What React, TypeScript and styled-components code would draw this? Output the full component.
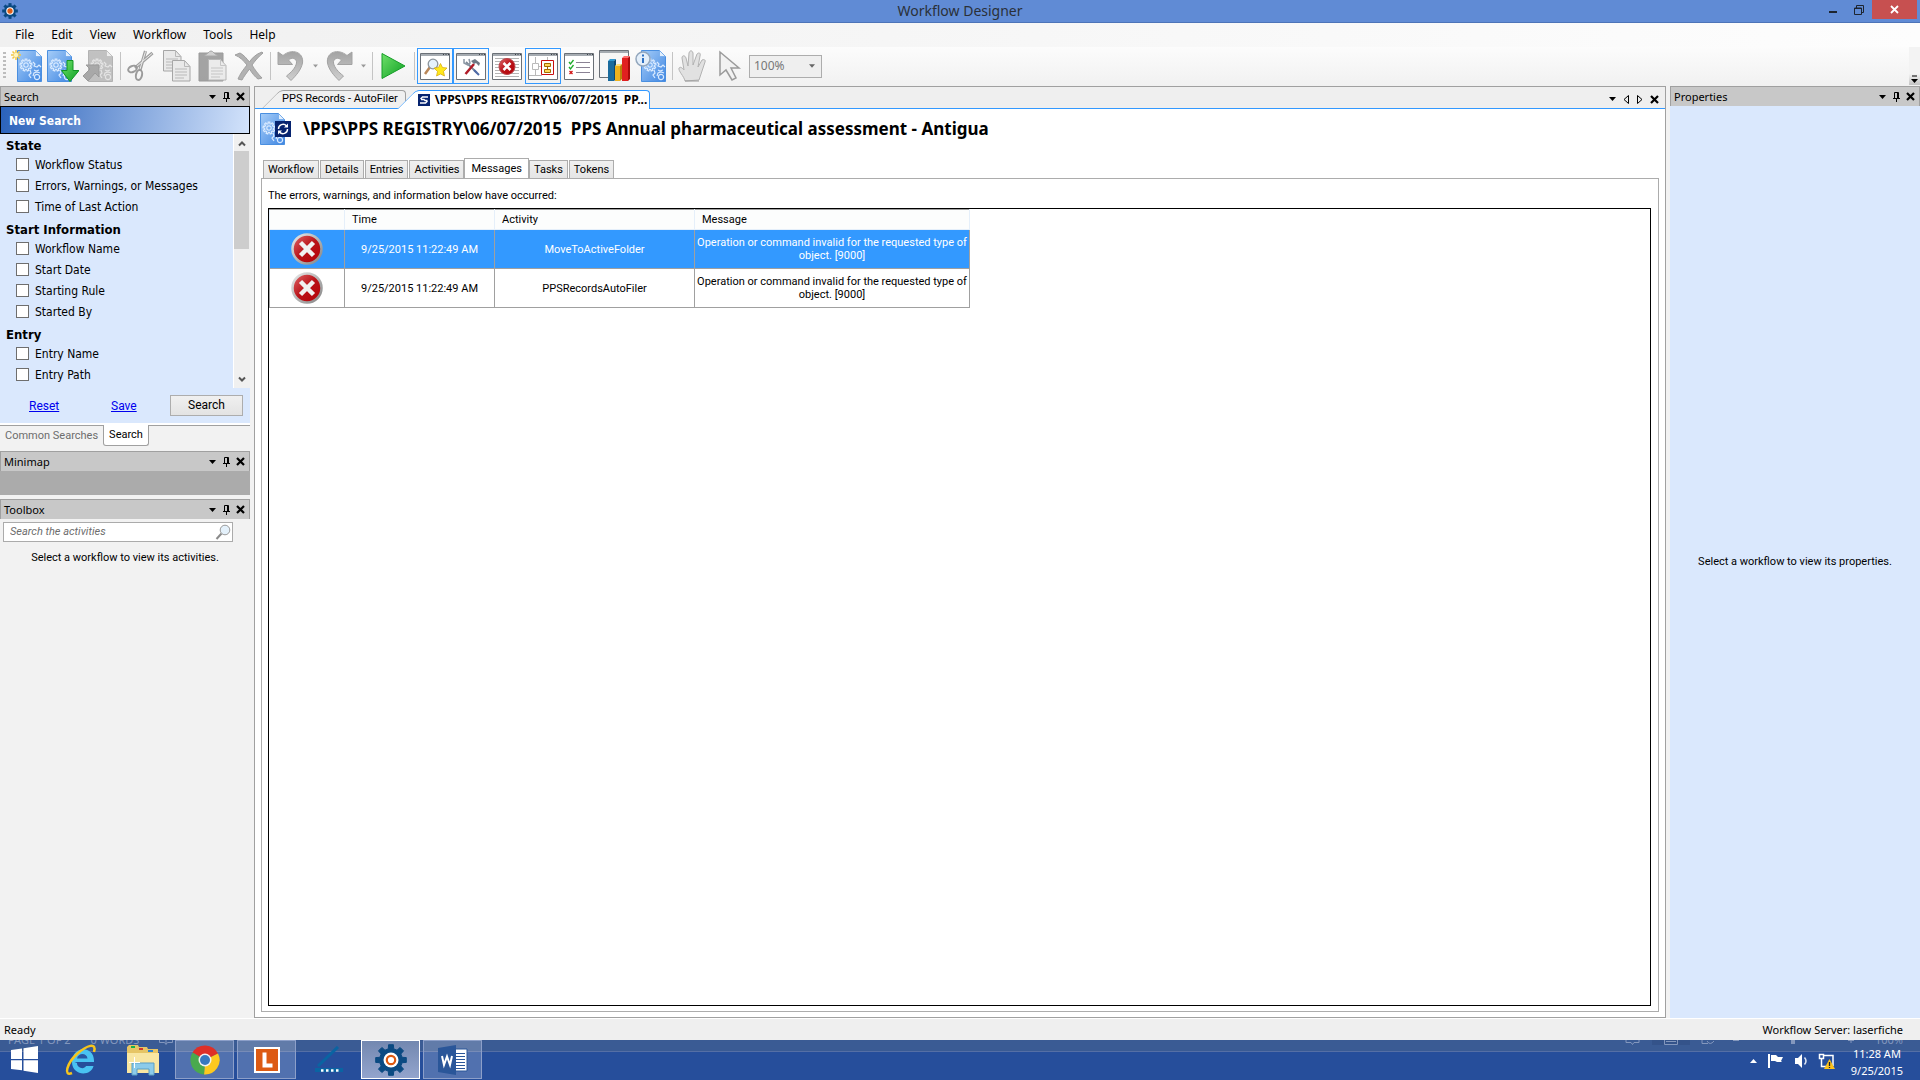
import React from "react";
import styled, { createGlobalStyle, css } from "styled-components";

const ui = `"Noto Sans", "Open Sans", sans-serif`;
const tahoma = `"DejaVu Sans Condensed", "DejaVu Sans", sans-serif`;
const classic = `Roboto, "Liberation Sans", Arial, sans-serif`;

const GlobalStyle = createGlobalStyle`
  *, *::before, *::after { box-sizing: border-box; }
  body { margin: 0; font: 11px/16px ${classic}; color: #000; background: #efefef; }
  button, input, select { font: inherit; color: inherit; margin: 0; }
  button { padding: 0; border: 0; background: none; }
  svg { display: block; flex: none; }
`;

const Window = styled.div`
  display: flex;
  flex-direction: column;
  min-height: 100vh;
`;

/* ---------- title bar and menu ---------- */

const TitleBar = styled.header`
  display: grid;
  grid-template-columns: 1fr auto 1fr;
  height: 23px;
  background: #608bd5;
  border-bottom: 1px solid #4d74b8;
`;

const AppIcon = styled.span`
  padding: 3px 2px;
`;

const WindowTitle = styled.h1`
  margin: 0;
  font: 14px/22px ${ui};
  color: #2a3038;
`;

const WindowButtons = styled.div`
  display: flex;
  justify-content: flex-end;
  padding-right: 3px;
`;

const WindowButton = styled.button<{ $close?: boolean }>`
  display: grid;
  place-items: center;
  width: ${(p) => (p.$close ? 45 : 26)}px;
  height: 19px;
  background: ${(p) => (p.$close ? "#c75050" : "transparent")};
`;

const MenuBar = styled.nav`
  display: flex;
  height: 24px;
  padding-left: 7px;
  background: linear-gradient(90deg, #f0f0f0, #fdfdfd);
`;

const MenuItem = styled.button`
  padding: 0 9px 0 8px;
  font: 12px/24px ${ui};
`;

/* ---------- toolbar ---------- */

const Toolbar = styled.div`
  display: flex;
  align-items: center;
  height: 39px;
  padding-bottom: 1px;
  background: linear-gradient(#fcfcfc, #f1f1f1);
`;

const Grip = styled.span`
  width: 3px;
  height: 28px;
  margin: 0 3px;
  background: repeating-linear-gradient(#bdbdbd 0 2px, transparent 2px 4px);
`;

const ToolButton = styled.button<{ $on?: boolean; $faded?: boolean }>`
  display: grid;
  place-items: center;
  width: 36px;
  height: 36px;
  border: 1px solid ${(p) => (p.$on ? "#3399ff" : "transparent")};
  opacity: ${(p) => (p.$faded ? 0.8 : 1)};
`;

const DropButton = styled.button`
  display: grid;
  place-items: center;
  width: 12px;
  height: 36px;
`;

const Separator = styled.span`
  width: 6px;
  height: 28px;
  background: linear-gradient(#c4c4c4, #c4c4c4) center / 1px 100% no-repeat;
`;

const ZoomBox = styled.div`
  display: grid;
  grid-template-columns: 1fr 12px;
  align-items: center;
  width: 73px;
  height: 23px;
  margin-left: 2px;
  border: 1px solid #adadad;
  background: #efefef;
  color: #777;

  select {
    grid-area: 1 / 1 / 2 / 3;
    width: 100%;
    height: 21px;
    padding: 0 4px;
    appearance: none;
    border: 0;
    background: none;
    font: 12px/20px ${ui};
  }

  svg { grid-area: 1 / 2; }
`;

const Overflow = styled.button`
  display: grid;
  place-items: end center;
  width: 11px;
  height: 38px;
  margin-left: auto;
  padding-bottom: 2px;
  background: linear-gradient(#f3f3f3 70%, #c4c4c4);
`;

/* ---------- docked panels ---------- */

const Workspace = styled.main`
  display: grid;
  grid-template-columns: 250px minmax(0, 1fr) 250px;
  gap: 4px;
  flex: 1;
  background: #f2f2f2;
`;

const Column = styled.div`
  display: flex;
  flex-direction: column;
  min-width: 0;
`;

const PanelHeader = styled.header`
  display: flex;
  align-items: center;
  height: 20px;
  padding: 0 2px 0 3px;
  border: 1px solid #a0a0a0;
  border-bottom: 0;
  background: #c8c8c8;
`;

const PanelTitle = styled.h2`
  flex: 1;
  margin: 0;
  font: 11px/16px ${ui};
`;

const PanelButton = styled.button`
  display: grid;
  place-items: center;
  width: 14px;
  height: 16px;
`;

const NewSearch = styled.div`
  height: 28px;
  padding-left: 8px;
  border: 1px solid #000;
  background: linear-gradient(100deg, #2a62bb, #d3e3fb);
  color: #fff;
  font: bold 12px/28px ${tahoma};
`;

const CriteriaArea = styled.div`
  display: flex;
  height: 254px;
  background: #dae8fd;
`;

const Criteria = styled.div`
  flex: 1;
  overflow: hidden;
`;

const CriteriaGroup = styled.fieldset`
  margin: 0 0 1px;
  padding: 0 0 0 6px;
  border: 0;

  legend {
    height: 20px;
    padding: 0;
    font: bold 13px/24px ${tahoma};
  }
`;

const Criterion = styled.label`
  display: flex;
  align-items: center;
  gap: 6px;
  height: 21px;
  padding-left: 10px;
  font: 12px/20px ${tahoma};

  input {
    width: 13px;
    height: 13px;
    appearance: none;
    border: 1px solid #6e6e6e;
    background: #fff;
  }

  input:checked { background: #3399ff; }
`;

const ScrollBar = styled.div`
  display: flex;
  flex-direction: column;
  align-items: center;
  justify-content: space-between;
  width: 17px;
  padding: 6px 0 5px;
  border-left: 1px solid #fff;
  background: linear-gradient(#cdcdcd, #cdcdcd) 0 17px / 15px 98px no-repeat #f0f0f0;
`;

const SearchActions = styled.div`
  display: grid;
  grid-template-columns: 82px 1fr 73px;
  align-items: center;
  height: 35px;
  padding: 0 7px 0 29px;
  background: #dae8fd;
`;

const ActionLink = styled.a`
  justify-self: start;
  color: #0000ee;
  font: 12px/16px ${classic};
`;

const SearchButton = styled.button`
  height: 21px;
  border: 1px solid #adadad;
  background: linear-gradient(#f0f0f0, #e3e3e3);
  font: 12px/19px ${classic};
`;

const BottomTabs = styled.div`
  display: flex;
  height: 24px;
  margin-bottom: 4px;
  border-top: 2px solid #fff;
  background: linear-gradient(#a0a0a0, #a0a0a0) 0 0 / 100% 1px no-repeat;
`;

const BottomTab = styled.button<{ $active?: boolean }>`
  height: 21px;
  padding: 0 5px;
  border: solid #a0a0a0;
  border-width: ${(p) => (p.$active ? "0 1px 1px" : "0")};
  border-radius: 0 0 3px 3px;
  background: ${(p) => (p.$active ? "#fff" : "transparent")};
  color: ${(p) => (p.$active ? "#000" : "#6d6d6d")};
  font: 11px/20px ${classic};
`;

const Minimap = styled.div`
  height: 24px;
  margin-bottom: 4px;
  background: #ababab;
`;

const SearchField = styled.label`
  display: flex;
  align-items: center;
  width: 230px;
  height: 20px;
  margin: 3px 0 0 3px;
  border: 1px solid #ababab;
  background: #fff;

  input {
    flex: 1;
    min-width: 0;
    height: 18px;
    padding: 0 6px;
    border: 0;
    background: none;
    font: italic 11px/18px ${classic};
  }

  input::placeholder { color: #6d6d6d; opacity: 1; }
`;

const Hint = styled.p`
  margin: 8px 0;
  text-align: center;
  font: 11px/16px ${classic};
`;

const Properties = styled.div`
  display: grid;
  place-items: center;
  flex: 1;
  background: #dae8fd;
`;

/* ---------- document area ---------- */

const Document = styled(Column)`
  border: 1px solid #a0a0a0;
  background: #fff;
`;

const DocTabs = styled.div`
  display: flex;
  align-items: flex-end;
  height: 22px;
  padding: 0 4px 0 7px;
  border-bottom: 1px solid #3399ff;
  background: #efefef;
`;

const DocTab = styled.button<{ $active?: boolean }>`
  position: relative;
  display: flex;
  align-items: center;
  gap: 5px;
  height: ${(p) => (p.$active ? 19 : 18)}px;
  margin: 0 0 ${(p) => (p.$active ? "-1px -9px" : "0 0")};
  padding: ${(p) => (p.$active ? "0 3px 0 21px" : "0 8px 0 20px")};
  font: ${(p) => (p.$active ? "bold 12px" : "normal 11px")} / 18px ${(p) => (p.$active ? ui : classic)};
  white-space: pre;

  &::before, &::after {
    content: "";
    position: absolute;
    top: 0;
    bottom: 0;
    border: 1px solid ${(p) => (p.$active ? "#3399ff" : "#a0a0a0")};
    border-bottom: 0;
    background: ${(p) => (p.$active ? "#fff" : "#f0f0f0")};
  }

  &::before {
    left: 0;
    width: 60px;
    border-right: 0;
    border-top-left-radius: 4px;
    transform: skewX(-45deg);
    transform-origin: bottom;
  }

  &::after {
    left: 30px;
    right: 0;
    border-left: 0;
    border-top-right-radius: 4px;
  }

  > * { position: relative; z-index: 1; }
`;

const DocControls = styled.div`
  display: flex;
  margin-left: auto;
  padding-bottom: 1px;
`;

const DocHeading = styled.div`
  display: flex;
  align-items: center;
  gap: 11px;
  height: 40px;
  padding-left: 5px;
`;

const DocTitle = styled.h2`
  margin: 0;
  font: bold 17px/24px ${ui};
  white-space: pre;
`;

const PageTabs = styled.div`
  display: flex;
  align-items: flex-end;
  gap: 1px;
  height: 30px;
  margin-bottom: -1px;
  padding-left: 8px;
`;

const PageTab = styled.button<{ $active?: boolean }>`
  height: ${(p) => (p.$active ? 21 : 19)}px;
  margin: 0 ${(p) => (p.$active ? "-1px" : "0")};
  padding: 0 ${(p) => (p.$active ? 6 : 4)}px;
  border: 1px solid #acacac;
  border-bottom-color: ${(p) => (p.$active ? "#fff" : "#acacac")};
  background: ${(p) => (p.$active ? "#fff" : "linear-gradient(#f0f0f0, #e5e5e5)")};
  font: 11px/18px ${classic};
`;

const Page = styled.section`
  display: flex;
  flex-direction: column;
  flex: 1;
  margin: 0 6px 5px;
  padding: 9px 7px 5px 6px;
  border: 1px solid #acacac;
`;

const Intro = styled.p`
  margin: 0 0 4px;
  font: 11px/16px ${classic};
`;

const GridFrame = styled.div`
  flex: 1;
  border: 1px solid #000;
`;

const MessageTable = styled.table`
  width: 701px;
  table-layout: fixed;
  border-collapse: collapse;
  font: 11px/13px ${classic};

  th {
    height: 20px;
    padding: 0 7px;
    border: 1px solid #e5effa;
    border-top-color: #a0a0a0;
    background: #fcfdfd;
    font-weight: normal;
    text-align: left;
  }
`;

const MessageRow = styled.tr<{ $selected?: boolean }>`
  height: 39px;
  ${(p) => p.$selected && css`background: #3399ff; color: #fff;`}

  td {
    padding: 0 1px;
    border: 1px solid #a0a0a0;
    text-align: center;
  }

  svg { margin: 0 auto; }
`;

/* ---------- status bar and taskbar ---------- */

const StatusBar = styled.footer`
  display: flex;
  justify-content: space-between;
  height: 22px;
  padding: 0 17px 0 4px;
  border-top: 1px solid #fff;
  background: #efefef;
  font: 11px/22px ${ui};
`;

const Taskbar = styled.nav`
  position: relative;
  display: flex;
  gap: 3px;
  height: 40px;
  background: linear-gradient(#3a5b94 0 11px, #556fa5 11px 12px, #264e9b 12px);
`;

const Ghost = styled.div`
  position: absolute;
  inset: 0 0 auto 0;
  display: flex;
  gap: 20px;
  height: 5px;
  padding: 0 17px 0 8px;
  overflow: hidden;
  color: #8397bd;
  font: 11px/16px ${ui};

  span { margin-top: -8px; }
  svg:last-of-type { margin-left: auto; }
`;

const TaskButton = styled.button<{ $state?: "open" | "active"; $start?: boolean }>`
  position: relative;
  display: grid;
  place-items: center;
  width: ${(p) => (p.$start ? 48 : 59)}px;
  height: 39px;
  border: 1px solid transparent;
  ${(p) => p.$state === "open" && css`border-color: #8c9fc9; background: rgba(255, 255, 255, 0.2);`}
  ${(p) => p.$state === "active" && css`border-color: #fff; background: linear-gradient(#7388b0, #93a4cd);`}
`;

const Tray = styled.div`
  display: flex;
  align-items: center;
  gap: 10px;
  margin-left: auto;
  padding: 2px 17px 0 0;
`;

const Clock = styled.time`
  margin-left: 6px;
  padding-top: 1px;
  color: #fff;
  font: 11px/17px ${ui};
  text-align: center;
`;

/* ---------- icons ---------- */

const gearPath = (r: number, n: number, depth: number) => {
  const pts: string[] = [];
  for (let i = 0; i < n; i++) {
    const step = (Math.PI * 2) / n;
    [[-0.3, r - depth], [-0.2, r], [0.2, r], [0.3, r - depth]].forEach(([o, d]) => {
      const a = step * (i + o);
      pts.push(`${(Math.sin(a) * d).toFixed(2)},${(-Math.cos(a) * d).toFixed(2)}`);
    });
  }
  return `M${pts.join("L")}Z`;
};

const GearLogo = ({ size }: { size: number }) => (
  <svg width={size} height={size} viewBox="-16 -16 32 32">
    <path d={gearPath(15.5, 8, 4)} fill="#0b4a82" stroke="#0b4a82" />
    <circle r="7.5" fill="#fff" />
    <circle r="4.2" fill={size > 20 ? "#fff" : "#dd5a12"} stroke="#dd5a12" strokeWidth="2.2" />
  </svg>
);

const DocShape = ({ gray, x = 4 }: { gray?: boolean; x?: number }) => (
  <g transform={`translate(${x} 0)`}>
    <path d="M.5.5h18l6 6v25H.5z" fill={gray ? "#b4b4b4" : "url(#docBlue)"} stroke={gray ? "#a2a2a2" : "#4a8fe0"} />
    <path d="M18.500 .5l6 6h-6z" fill={gray ? "#ececec" : "#e2effd"} stroke={gray ? "#aaa" : "#69a4ea"} strokeWidth=".7" />
    <g fill="none" stroke={gray ? "#e0e0e0" : "#d9eaff"} strokeWidth="1.200">
      <g transform="translate(9 15)"><path d={gearPath(6, 9, 1.6)} /><circle r="2.200" /></g>
      <g transform="translate(20 27)"><circle r="2.600" /><path d="M-4-1l1-3 3-1 3 1" /></g>
      <path d="M16 12l2 2-1 2 3 1 2-2 2 2M13 20l1 3-2 2 2 3M17 20l2 1 3-1" />
    </g>
  </g>
);

const Defs = () => (
  <defs>
    <linearGradient id="docBlue" x1="0" y1="0" x2="1" y2="1">
      <stop offset="0" stopColor="#a6cdf8" /><stop offset="1" stopColor="#3f86e2" />
    </linearGradient>
    <linearGradient id="green" x1="0" y1="0" x2="1" y2="1">
      <stop offset="0" stopColor="#6fe06a" /><stop offset="1" stopColor="#0ea023" />
    </linearGradient>
    <linearGradient id="gray" x1="0" y1="0" x2="0" y2="1">
      <stop offset="0" stopColor="#a3a3a3" /><stop offset="1" stopColor="#cfcfcf" />
    </linearGradient>
    <linearGradient id="red" x1="0" y1="0" x2="1" y2="1">
      <stop offset="0" stopColor="#e0696b" /><stop offset=".5" stopColor="#b91218" /><stop offset="1" stopColor="#b50006" />
    </linearGradient>
    <linearGradient id="ring" x1="0" y1="0" x2="1" y2="1">
      <stop offset="0" stopColor="#e8e8e8" /><stop offset="1" stopColor="#858585" />
    </linearGradient>
  </defs>
);

const Icon32 = ({ children }: { children: React.ReactNode }) => (
  <svg width="32" height="32" viewBox="0 0 32 32"><Defs />{children}</svg>
);

const NewIcon = () => (
  <Icon32>
    <DocShape x={6} />
    <path d="M5 0v10M0 5h10M1.500 1.500l7 7M8.500 1.500l-7 7" stroke="#f2c642" strokeWidth="1.500" />
    <circle cx="5" cy="5" r="2.200" fill="#fff4bd" />
  </Icon32>
);
const OpenIcon = () => (
  <Icon32>
    <DocShape x={0} />
    <path d="M20 10.500h6v10h6L23 31.500l-8.500-11H20z" fill="url(#green)" stroke="#119622" />
  </Icon32>
);
const PublishIcon = () => (
  <Icon32>
    <DocShape x={5} gray />
    <path d="M3 15h13v12l-4-4-7 8-5-5 7-7z" fill="#969696" stroke="#858585" />
  </Icon32>
);
const CutIcon = () => (
  <Icon32>
    <g fill="none" stroke="#9b9b9b">
      <path d="M20.500 1l-5.500 19M27.500 3L10 18" stroke="#a0a0a0" strokeWidth="3.200" />
      <path d="M20.500 1.500L15 19M27 3.500L11 17" stroke="#ececec" strokeWidth="1" />
      <ellipse cx="7.500" cy="19" rx="4.500" ry="3" transform="rotate(-22 7.500 19)" strokeWidth="2" />
      <ellipse cx="14" cy="25" rx="3" ry="5" transform="rotate(14 14 25)" strokeWidth="2" />
    </g>
  </Icon32>
);
const PageGlyph = ({ x, y }: { x: number; y: number }) => (
  <g transform={`translate(${x} ${y})`}>
    <path d="M.5.5h12l5.500 6v14.500H.5z" fill="#e9e9e9" stroke="#a6a6a6" />
    <path d="M12.500.5v6H18M3 9h12M3 12h12M3 15h12M3 18h9" fill="none" stroke="#b9b9b9" />
  </g>
);
const CopyIcon = () => <Icon32><PageGlyph x={2} y={0} /><PageGlyph x={11} y={10} /></Icon32>;
const PasteIcon = () => (
  <Icon32>
    <path d="M2 3h24v28H2z" fill="#8f8f8f" stroke="#848484" />
    <path d="M7 6l4-3q3-4 6 0l4 3z" fill="#c8c8c8" stroke="#949494" />
    <PageGlyph x={11} y={9} />
  </Icon32>
);
const DeleteIcon = () => (
  <Icon32>
    <path d="M2 5l5-2c4 2 7 6 9.500 9C19 8 23 4 29 2l1 1c-5 4-8 8-11 12 3 5 6 9 10 13l-4 1c-3-2-6-6-8.500-10-3 4-6 8-7.500 11l-4-1c2-5 5-9 9-14C11 11 7 7 2 5z" fill="#b2b2b2" stroke="#a0a0a0" />
  </Icon32>
);
const TurnIcon = ({ flip }: { flip?: boolean }) => (
  <Icon32>
    <g transform={flip ? "translate(32 0) scale(-1 1)" : undefined}>
      <path d="M3 2l5 3.500c9-7.500 21-3.500 19.500 7.500-1.500 7-6 12-11.500 17.500l-4.500-4.500c5-4 9-8 10-13 .5-5-5-6-8-3l4 4.500H3z" fill="url(#gray)" stroke="#a3a3a3" />
    </g>
  </Icon32>
);
const RunIcon = () => (
  <Icon32><path d="M5 3.500l23 12.500L5 28.500z" fill="url(#green)" stroke="#159e27" /></Icon32>
);
const PaneFrame = ({ children }: { children?: React.ReactNode }) => (
  <Icon32>
    <path d="M1.500 3.500h29v26h-29z" fill="#fff" stroke="#6a7077" />
    <path d="M2 4h28v2H2z" fill="#a5abb1" />
    <path d="M24 4.500h1M26.500 4.500h1M29 4.500h1" stroke="#3a4047" />
    {children}
  </Icon32>
);
const SearchPaneIcon = () => (
  <PaneFrame>
    <path d="M11 17l-5 7" stroke="#b98758" strokeWidth="2.500" />
    <circle cx="14" cy="14" r="4.800" fill="#e6f2fc" stroke="#8b949c" strokeWidth="1.300" />
    <path d="M21.500 13.500l2 4 4.500.5-3.500 3.500 1 4.500-4-2-4 2 1-4.500-3.500-3.500 4.500-.5z" fill="#ffe81c" stroke="#d6a808" strokeWidth=".7" />
  </PaneFrame>
);
const ToolsPaneIcon = () => (
  <PaneFrame>
    <path d="M11 12l11 11" stroke="#7c8896" strokeWidth="1.800" />
    <path d="M19 14l-8.500 10" stroke="#b01c28" strokeWidth="2.500" />
    <path d="M16 11l4-2 5 4-1 3-3-3-2 1z" fill="#6d7884" />
    <path d="M9 9v4l4 2 2-2-1-4" fill="none" stroke="#8b97a4" strokeWidth="1.500" />
    <path d="M19 20l5 5" stroke="#4d6aa8" strokeWidth="2" />
  </PaneFrame>
);
const ErrorPaneIcon = () => (
  <PaneFrame>
    <path d="M4 8.500h24M4 11.500h24M4 14.500h24M4 17.500h24M4 20.500h24M4 23.500h24M4 26.500h24" stroke="#b4b4b4" />
    <circle cx="16" cy="16.500" r="8" fill="url(#red)" stroke="#b9454a" />
    <path d="M12.500 13l7 7M19.500 13l-7 7" stroke="#fff" strokeWidth="2.500" />
  </PaneFrame>
);
const MinimapPaneIcon = () => (
  <PaneFrame>
    <path d="M8.500 7v6.500h-3v6h6v-6h-3M8.500 20v5.500M2 25.500h13M11.500 16.500H15M20.500 7v3" fill="none" stroke="#b9b9b9" />
    <path d="M14.500 10.500h12v14h-12z" fill="none" stroke="#c80f10" />
    <path d="M17.500 13.500h6v3h-6zM17.500 19.500h6v3h-6zM20.500 17v2" fill="#ffd75e" stroke="#a06d00" />
  </PaneFrame>
);
const TasksPaneIcon = () => (
  <PaneFrame>
    <path d="M13 12.500h14M13 17.500h14M13 22.500h14" stroke="#8a8294" />
    <path d="M6 12l1.500 2 3-4M6 17l1.500 2 3-4" fill="none" stroke="#1eaa2a" strokeWidth="1.300" />
    <path d="M6.500 21l3 3M9.500 21l-3 3" stroke="#d21414" strokeWidth="1.300" />
  </PaneFrame>
);
const ReportIcon = () => (
  <Icon32>
    <path d="M.5.5h29v27H.5z" fill="#f6f6f6" stroke="#6a7077" />
    <path d="M1 1h28v2H1z" fill="#a5abb1" />
    <path d="M9 11h6v20H9z" fill="#1b6b9d" /><path d="M9 11l2-2h6l-2 2z" fill="#2f98d1" /><path d="M15 11l2-2v20l-2 2z" fill="#0f4a72" />
    <path d="M16 16h5v15h-5z" fill="#eeb21c" /><path d="M16 16l2-2h5l-2 2z" fill="#ffe07a" /><path d="M21 16l2-2v15l-2 2z" fill="#b9820a" />
    <path d="M23 8h6v23h-6z" fill="#e02020" /><path d="M29 8l2-2v23l-2 2z" fill="#a90a0a" /><path d="M23 8l2-2h6l-2 2z" fill="#ff6d6d" />
  </Icon32>
);
const InfoDocIcon = () => (
  <Icon32>
    <DocShape x={6} />
    <circle cx="8" cy="9" r="7" fill="#e4effa" stroke="#93a7bd" strokeWidth="1.500" />
    <path d="M8 8v5M8 4.500v2" stroke="#2f71c2" strokeWidth="2" />
  </Icon32>
);
const HandIcon = () => (
  <Icon32>
    <path d="M8 31c-1-5-7-10-6-13 2-2 4 1 5 2L5 8c0-3 3-3 4 0l2 8 1-13c1-3 3-3 4 0v12l4-11c2-2 4-1 3 2l-2 11 4-7c2-1 4 0 3 2-2 6-4 12-6 18z" fill="#e1e1e1" stroke="#b2b2b2" />
    <path d="M8 31h14" stroke="#999" />
  </Icon32>
);
const PointerIcon = () => (
  <Icon32><path d="M7 2v23l6-5 6 10 4-2-5-10h8z" fill="#f2f2f2" stroke="#9b9b9b" strokeWidth="1.500" /></Icon32>
);

const Down = ({ color = "#000", size = 7 }: { color?: string; size?: number }) => (
  <svg width={size} height="4" viewBox="0 0 7 4"><path d="M0 0h7L3.500 4z" fill={color} /></svg>
);
const Pin = () => (
  <svg width="9" height="10" viewBox="0 0 9 10"><path d="M2.500 6V.5h4V6M5.500 1v5M1 6.500h7M4.500 7v3" fill="none" stroke="#000" /></svg>
);
const Cross = ({ color = "#000", w = 2.2 }: { color?: string; w?: number }) => (
  <svg width="9" height="9" viewBox="0 0 9 9"><path d="M1 1l7 7M8 1L1 8" stroke={color} strokeWidth={w} /></svg>
);
const Arrow = ({ left }: { left?: boolean }) => (
  <svg width="6" height="9" viewBox="0 0 6 9"><path d={left ? "M5.500 .5v8L1 4.500z" : "M.5.5v8L5 4.500z"} fill="none" stroke="#000" /></svg>
);
const Chevron = ({ up }: { up?: boolean }) => (
  <svg width="8" height="7" viewBox="0 0 8 7"><path d={up ? "M1 5.500l3-3 3 3" : "M1 1.500l3 3 3-3"} fill="none" stroke="#555" strokeWidth="2" /></svg>
);
const SyncMark = () => (
  <>
    <path d="M0 0h16v16H0z" fill="#06236f" />
    <path d="M3.500 8a4.500 4.500 0 0 1 8-3M12.500 8a4.500 4.500 0 0 1-8 3" fill="none" stroke="#fff" strokeWidth="1.400" />
    <path d="M13 2.500v4H9zM3 13.500v-4h4z" fill="#fff" />
  </>
);
const SyncIcon = () => (
  <svg width="12" height="12" viewBox="0 0 12 12">
    <path d="M0 0h12v12H0z" fill="#06236f" />
    <path d="M10 3H4.500L2.500 5M2 9h5.500l2-2M3 5.500h3l1 1h2.500" fill="none" stroke="#fff" strokeWidth="1.400" />
  </svg>
);
const InstanceIcon = () => (
  <Icon32>
    <DocShape x={0} />
    <g transform="translate(15 8)"><SyncMark /></g>
  </Icon32>
);
const ErrorIcon = () => (
  <Icon32>
    <circle cx="16" cy="16" r="14.500" fill="url(#red)" stroke="url(#ring)" strokeWidth="2.500" />
    <path d="M9.500 9.500l13 13M22.500 9.500l-13 13" stroke="#f1f1f1" strokeWidth="4.500" />
  </Icon32>
);
const Magnifier = () => (
  <svg width="17" height="17" viewBox="0 0 17 17">
    <path d="M6.500 9.500L1.500 15" stroke="#8a8a8a" strokeWidth="2" />
    <circle cx="10" cy="6" r="4.800" fill="#e4f1fb" stroke="#9a9a9a" />
  </svg>
);

const StartIcon = () => (
  <svg width="27" height="27" viewBox="0 0 27 27"><path d="M0 4l11-1.500V13H0zM12.500 2.200L27 0v13H12.500zM0 14.300h11v10L0 23zM12.500 14.300H27V27l-14.500-2.300z" fill="#fff" /></svg>
);
const IeIcon = () => (
  <svg width="32" height="32" viewBox="0 0 32 32">
    <path d="M9 18h8.500M9.500 18H29c1-17-22-17-22 0 0 14 19 15 21.500 4H21c-2 4-9 2-9-3" fill="#49c3f2" />
    <path d="M12 14.500c1-6 10-6 10.500 0z" fill="#2858a4" />
    <path d="M7 29C-2 33 2 19 12 10S32-2 29 8" fill="none" stroke="#f7c51c" strokeWidth="2.500" />
  </svg>
);
const FolderIcon = () => (
  <svg width="34" height="32" viewBox="0 0 34 32">
    <path d="M1 3l2-2h9l1 2h8l1 2h10v24H1z" fill="#e6c565" />
    <path d="M5 2h4v2H5z" fill="#18b04b" /><path d="M13 4h4v2h-4z" fill="#d2392b" /><path d="M22 6h5v2h-5z" fill="#2a80cf" />
    <path d="M1 9h32v20H1z" fill="#f8e6a2" />
    <path d="M6 31V19h22v12h-5v-6H11v6z" fill="#8ccbea" stroke="#5b9fc6" />
    <path d="M8.500 13v11M3 18.500h11" stroke="#fff" strokeWidth="1" />
  </svg>
);
const ChromeIcon = () => (
  <svg width="30" height="30" viewBox="-15 -15 30 30">
    <path d="M0 0L-12.500-7.500A14.500 14.500 0 0 1 13-6.500z" fill="#de2f27" />
    <path d="M0 0L13-6.500A14.500 14.500 0 0 1-1 14.500z" fill="#fcc91f" />
    <path d="M0 0L-1 14.500A14.500 14.500 0 0 1-12.500-7.500z" fill="#4aaa4e" />
    <circle r="6.500" fill="#f2f2f2" /><circle r="5" fill="#3878bf" />
  </svg>
);
const LaserficheIcon = () => (
  <svg width="26" height="26" viewBox="0 0 26 26"><path d="M1 1h24v24H1z" fill="#dd5a12" stroke="#fff" strokeWidth="2" /><path d="M8.500 5.500h4v11h6v4h-10z" fill="#fff" /></svg>
);
const ScannerIcon = () => (
  <svg width="28" height="28" viewBox="0 0 28 28"><path d="M3 20L23 1" stroke="#0a64a2" strokeWidth="3" /><path d="M0 22h28v4H0z" fill="#0a64a2" /><path d="M6 24.500h2.500M11 24.500h2.500M16 24.500h2.500M21 24.500h2.500" stroke="#fff" strokeWidth="2.500" /></svg>
);
const WordIcon = () => (
  <svg width="30" height="30" viewBox="0 0 30 30">
    <path d="M16 4h13v22H16z" fill="#fff" stroke="#2a5699" />
    <path d="M18 8.500h9M18 11.500h9M18 14.500h9M18 17.500h9M18 20.500h9M18 23.500h9" stroke="#2a5699" />
    <path d="M0 3l18-3v30L0 27z" fill="#2a5699" />
    <path d="M4 11l2 9 3-8.500 3 8.500 2-9" fill="none" stroke="#fff" strokeWidth="2" />
  </svg>
);
const FlagIcon = () => (
  <svg width="17" height="16" viewBox="0 0 17 16"><path d="M2 1v14" stroke="#fff" strokeWidth="2" /><path d="M4 2h5l2 2h5l-2 4 1 1h-5L8 8H4z" fill="#fff" /></svg>
);
const SpeakerIcon = () => (
  <svg width="14" height="16" viewBox="0 0 14 16"><path d="M1 5h3l4-4v14l-4-4H1z" fill="#fff" /><path d="M10.500 4.500q3 3.500 0 7" fill="none" stroke="#dce4f4" strokeWidth="1.500" /></svg>
);
const NetworkIcon = () => (
  <svg width="17" height="17" viewBox="0 0 17 17">
    <path d="M5 2.500h10V13M1.500 1.500h4v4h-4zM3.500 6v7.500H9" fill="none" stroke="#fff" strokeWidth="1.500" />
    <path d="M11.500 6L17 16H6z" fill="#fcc21c" /><path d="M11.500 9v4M11.500 14v1" stroke="#222" strokeWidth="1.300" />
  </svg>
);
const GhostBook = () => (
  <svg width="14" height="5" viewBox="0 0 14 5"><path d="M.5 0v2.500h5l1.500 2 1.500-2h5V0M7 0v4" fill="none" stroke="#8397bd" /></svg>
);
const GhostViews = () => (
  <svg width="230" height="5" viewBox="0 0 230 5">
    <path d="M27 0h38v5H27z" fill="#34538a" />
    <path d="M1 0v2.500h5l1.500 2 1.500-2h5V0M39.500 0v4.500h13V0M41 1.500h10M77 0v3.500h6M82 1q3 5 7 0M108 .5h6M223 .5h6M226 0v3" fill="none" stroke="#8397bd" />
    <path d="M166 0h4v4h-4z" fill="#8397bd" />
  </svg>
);

/* ---------- composition ---------- */

const groups = [
  { title: "State", items: ["Workflow Status", "Errors, Warnings, or Messages", "Time of Last Action"] },
  { title: "Start Information", items: ["Workflow Name", "Start Date", "Starting Rule", "Started By"] },
  { title: "Entry", items: ["Entry Name", "Entry Path"] },
];

const messages = [
  { time: "9/25/2015 11:22:49 AM", activity: "MoveToActiveFolder" },
  { time: "9/25/2015 11:22:49 AM", activity: "PPSRecordsAutoFiler" },
];

const Header = ({ title }: { title: string }) => (
  <PanelHeader>
    <PanelTitle>{title}</PanelTitle>
    <PanelButton aria-label={`${title} options`}><Down /></PanelButton>
    <PanelButton aria-label={`Pin ${title}`}><Pin /></PanelButton>
    <PanelButton aria-label={`Close ${title}`}><Cross /></PanelButton>
  </PanelHeader>
);

export default function App() {
  return (
    <Window>
      <GlobalStyle />
      <TitleBar>
        <AppIcon><GearLogo size={16} /></AppIcon>
        <WindowTitle>Workflow Designer</WindowTitle>
        <WindowButtons>
          <WindowButton aria-label="Minimize"><svg width="8" height="9"><path d="M0 6h8v2H0z" fill="#1d2530" /></svg></WindowButton>
          <WindowButton aria-label="Restore"><svg width="10" height="10"><path d="M.5 3h7v6.500h-7zM2.500 3V.5h7v7H8M1 3.500h6" fill="none" stroke="#1d2530" /></svg></WindowButton>
          <WindowButton $close aria-label="Close"><Cross color="#fff" w={1.8} /></WindowButton>
        </WindowButtons>
      </TitleBar>

      <MenuBar>
        {["File", "Edit", "View", "Workflow", "Tools", "Help"].map((m) => <MenuItem key={m}>{m}</MenuItem>)}
      </MenuBar>

      <Toolbar>
        <Grip />
        <ToolButton aria-label="New"><NewIcon /></ToolButton>
        <ToolButton aria-label="Open"><OpenIcon /></ToolButton>
        <ToolButton aria-label="Publish" $faded><PublishIcon /></ToolButton>
        <Separator />
        <ToolButton aria-label="Cut"><CutIcon /></ToolButton>
        <ToolButton aria-label="Copy"><CopyIcon /></ToolButton>
        <ToolButton aria-label="Paste" $faded><PasteIcon /></ToolButton>
        <ToolButton aria-label="Delete"><DeleteIcon /></ToolButton>
        <Separator />
        <ToolButton aria-label="Undo"><TurnIcon /></ToolButton>
        <DropButton aria-label="Undo list"><Down color="#999" size={5} /></DropButton>
        <ToolButton aria-label="Redo"><TurnIcon flip /></ToolButton>
        <DropButton aria-label="Redo list"><Down color="#999" size={5} /></DropButton>
        <Separator />
        <ToolButton aria-label="Run"><RunIcon /></ToolButton>
        <Separator />
        <ToolButton $on aria-label="Search pane"><SearchPaneIcon /></ToolButton>
        <ToolButton $on aria-label="Toolbox pane"><ToolsPaneIcon /></ToolButton>
        <ToolButton aria-label="Errors pane"><ErrorPaneIcon /></ToolButton>
        <ToolButton $on aria-label="Minimap pane"><MinimapPaneIcon /></ToolButton>
        <ToolButton aria-label="Tasks pane"><TasksPaneIcon /></ToolButton>
        <ToolButton aria-label="Reports"><ReportIcon /></ToolButton>
        <ToolButton aria-label="Workflow information"><InfoDocIcon /></ToolButton>
        <Separator />
        <ToolButton aria-label="Pan"><HandIcon /></ToolButton>
        <ToolButton aria-label="Select"><PointerIcon /></ToolButton>
        <ZoomBox>
          <select aria-label="Zoom"><option>100%</option></select>
          <Down color="#666" size={6} />
        </ZoomBox>
        <Overflow aria-label="Toolbar options">
          <svg width="7" height="8"><path d="M1 1h5" stroke="#000" /><path d="M0 4h7L3.500 8z" /></svg>
        </Overflow>
      </Toolbar>

      <Workspace>
        <Column>
          <Header title="Search" />
          <NewSearch>New Search</NewSearch>
          <CriteriaArea>
            <Criteria>
              {groups.map((g) => (
                <CriteriaGroup key={g.title}>
                  <legend>{g.title}</legend>
                  {g.items.map((i) => <Criterion key={i}><input type="checkbox" />{i}</Criterion>)}
                </CriteriaGroup>
              ))}
            </Criteria>
            <ScrollBar><Chevron up /><Chevron /></ScrollBar>
          </CriteriaArea>
          <SearchActions>
            <ActionLink href="#reset">Reset</ActionLink>
            <ActionLink href="#save">Save</ActionLink>
            <SearchButton>Search</SearchButton>
          </SearchActions>
          <BottomTabs>
            <BottomTab>Common Searches</BottomTab>
            <BottomTab $active>Search</BottomTab>
          </BottomTabs>
          <Header title="Minimap" />
          <Minimap />
          <Header title="Toolbox" />
          <SearchField>
            <input type="text" aria-label="Search the activities" placeholder="Search the activities" />
            <Magnifier />
          </SearchField>
          <Hint>Select a workflow to view its activities.</Hint>
        </Column>

        <Document>
          <DocTabs>
            <DocTab><span>PPS Records - AutoFiler</span></DocTab>
            <DocTab $active>
              <SyncIcon />
              <span>{"\\PPS\\PPS REGISTRY\\06/07/2015  PP..."}</span>
            </DocTab>
            <DocControls>
              <PanelButton aria-label="Open documents"><Down /></PanelButton>
              <PanelButton aria-label="Previous"><Arrow left /></PanelButton>
              <PanelButton aria-label="Next"><Arrow /></PanelButton>
              <PanelButton aria-label="Close document"><Cross /></PanelButton>
            </DocControls>
          </DocTabs>
          <DocHeading>
            <InstanceIcon />
            <DocTitle>{"\\PPS\\PPS REGISTRY\\06/07/2015  PPS Annual pharmaceutical assessment - Antigua"}</DocTitle>
          </DocHeading>
          <PageTabs>
            {["Workflow", "Details", "Entries", "Activities", "Messages", "Tasks", "Tokens"].map((t) => (
              <PageTab key={t} $active={t === "Messages"}>{t}</PageTab>
            ))}
          </PageTabs>
          <Page>
            <Intro>The errors, warnings, and information below have occurred:</Intro>
            <GridFrame>
              <MessageTable>
                <colgroup><col width={75} /><col width={150} /><col width={200} /><col width={275} /></colgroup>
                <thead><tr><th aria-label="Severity" /><th>Time</th><th>Activity</th><th>Message</th></tr></thead>
                <tbody>
                  {messages.map((m, i) => (
                    <MessageRow key={m.activity} $selected={i === 0}>
                      <td><ErrorIcon /></td>
                      <td>{m.time}</td>
                      <td>{m.activity}</td>
                      <td>Operation or command invalid for the requested type of object. [9000]</td>
                    </MessageRow>
                  ))}
                </tbody>
              </MessageTable>
            </GridFrame>
          </Page>
        </Document>

        <Column>
          <Header title="Properties" />
          <Properties><Hint>Select a workflow to view its properties.</Hint></Properties>
        </Column>
      </Workspace>

      <StatusBar><span>Ready</span><span>Workflow Server: laserfiche</span></StatusBar>

      <Taskbar>
        <Ghost><span>PAGE 1 OF 2</span><span>0 WORDS</span><GhostBook /><GhostViews /><span>100%</span></Ghost>
        <TaskButton $start aria-label="Start"><StartIcon /></TaskButton>
        <TaskButton aria-label="Internet Explorer"><IeIcon /></TaskButton>
        <TaskButton aria-label="File Explorer"><FolderIcon /></TaskButton>
        <TaskButton $state="open" aria-label="Chrome"><ChromeIcon /></TaskButton>
        <TaskButton $state="open" aria-label="Laserfiche"><LaserficheIcon /></TaskButton>
        <TaskButton aria-label="Scanning"><ScannerIcon /></TaskButton>
        <TaskButton $state="active" aria-label="Workflow Designer"><GearLogo size={32} /></TaskButton>
        <TaskButton $state="open" aria-label="Word"><WordIcon /></TaskButton>
        <Tray>
          <svg width="7" height="4"><path d="M0 4h7L3.500 0z" fill="#fff" /></svg>
          <FlagIcon />
          <SpeakerIcon />
          <NetworkIcon />
          <Clock>11:28 AM<br />9/25/2015</Clock>
        </Tray>
      </Taskbar>
    </Window>
  );
}
